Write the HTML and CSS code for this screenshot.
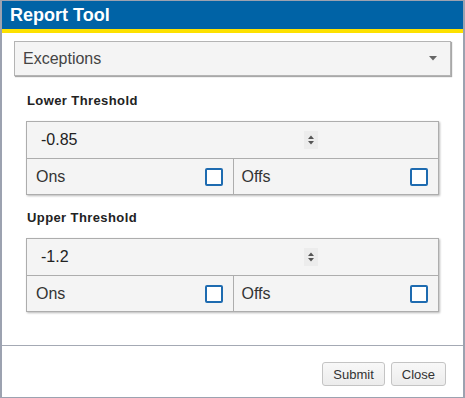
FILE: index.html
```html
<!DOCTYPE html>
<html>
<head>
<meta charset="utf-8">
<title>Report Tool</title>
<link rel="stylesheet" href="styles.css">
</head>
<body>
<div class="dialog">
  <div class="titlebar">Report Tool</div>
  <div class="stripe"></div>
  <div class="panel">
    <div class="select">
      <span class="select-text">Exceptions</span>
      <svg class="caret" width="8" height="5" viewBox="0 0 8 5"><polygon points="0,0 8,0 4,4.5" fill="#666"/></svg>
    </div>
    <div class="group group-first">
      <div class="group-label">Lower Threshold</div>
      <div class="box">
        <div class="num-row">
          <span class="num-value">-0.85</span>
          <span class="spin"><svg width="14" height="18" viewBox="0 0 14 18"><polygon points="4,8 10,8 7,4.5" fill="#555"/><polygon points="4,10 10,10 7,13.5" fill="#555"/></svg></span>
        </div>
        <div class="check-row">
          <div class="cell"><span>Ons</span><span class="checkbox"></span></div>
          <div class="cell cell-right"><span>Offs</span><span class="checkbox"></span></div>
        </div>
      </div>
    </div>
    <div class="group group-second">
      <div class="group-label">Upper Threshold</div>
      <div class="box">
        <div class="num-row">
          <span class="num-value">-1.2</span>
          <span class="spin"><svg width="14" height="18" viewBox="0 0 14 18"><polygon points="4,8 10,8 7,4.5" fill="#555"/><polygon points="4,10 10,10 7,13.5" fill="#555"/></svg></span>
        </div>
        <div class="check-row">
          <div class="cell"><span>Ons</span><span class="checkbox"></span></div>
          <div class="cell cell-right"><span>Offs</span><span class="checkbox"></span></div>
        </div>
      </div>
    </div>
  </div>
  <div class="footer">
    <button class="btn">Submit</button>
    <button class="btn">Close</button>
  </div>
</div>
</body>
</html>
```
FILE: styles.css
```css
html, body {
  margin: 0;
  padding: 0;
  background: #ffffff;
}

body {
  font-family: "Liberation Sans", Arial, sans-serif;
}

.dialog {
  width: 465px;
  height: 398px;
  box-sizing: border-box;
  border-style: solid;
  border-color: #9ca2b0;
  border-width: 1px 2px 1px 2px;
  display: flex;
  flex-direction: column;
  background: #ffffff;
}

.titlebar {
  height: 28px;
  line-height: 28px;
  background: #0063a6;
  color: #ffffff;
  font-size: 18px;
  font-weight: bold;
  padding-left: 8px;
}

.stripe {
  height: 4px;
  background: #fde100;
}

.panel {
  padding: 8px 12px 33px 12px;
  border-bottom: 1px solid #a4a9b4;
}

.select {
  height: 33px;
  border: 1px solid #b4b4b4;
  box-shadow: 1px 1px 1px #a8a8a8;
  background: #f4f4f4;
  display: flex;
  align-items: center;
  justify-content: space-between;
  padding: 0 13px 0 8px;
}

.select-text {
  font-size: 16px;
  color: #444444;
}

.caret {
  display: block;
}

.group {
  padding: 0 12px;
}

.group-first {
  margin-top: 16px;
}

.group-second {
  margin-top: 14px;
}

.group-label {
  font-size: 13px;
  font-weight: bold;
  letter-spacing: 0.4px;
  line-height: 17px;
  color: #222222;
  padding-left: 1px;
  margin-bottom: 12px;
}

.box {
  border: 1px solid #adadad;
  box-shadow: 1px 1px 2px rgba(0, 0, 0, 0.28);
  background: #f4f4f4;
}

.num-row {
  height: 36px;
  border-bottom: 1px solid #adadad;
  display: flex;
  align-items: center;
}

.num-value {
  width: 277px;
  box-sizing: border-box;
  padding-left: 14px;
  font-size: 16px;
  color: #222222;
}

.spin {
  width: 14px;
  height: 18px;
  background: #ececec;
  display: block;
}

.spin svg {
  display: block;
}

.check-row {
  height: 35px;
  display: flex;
}

.cell {
  flex: 1;
  display: flex;
  align-items: center;
  justify-content: space-between;
  padding: 0 10px 0 9px;
  font-size: 16px;
  color: #333333;
}

.cell-right {
  border-left: 1px solid #adadad;
  padding-left: 8px;
}

.checkbox {
  width: 14px;
  height: 14px;
  border: 2px solid #1e6bb0;
  border-radius: 2px;
  background: #ffffff;
  display: block;
}

.footer {
  flex: 1;
  display: flex;
  justify-content: flex-end;
  align-items: flex-start;
  gap: 6px;
  padding: 16px 17px 0 0;
}

.btn {
  height: 24px;
  padding: 0 10px;
  font-family: "Liberation Sans", Arial, sans-serif;
  font-size: 13px;
  color: #333333;
  background: linear-gradient(#f8f8f8, #ececec);
  border: 1px solid #c4c4c4;
  border-radius: 3px;
}
```
